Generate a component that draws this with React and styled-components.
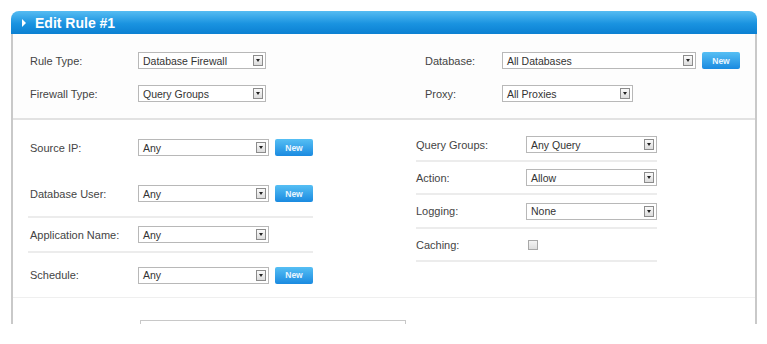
import React from "react";
import styled, { createGlobalStyle } from "styled-components";

const GlobalStyle = createGlobalStyle`
  html, body {
    margin: 0;
    padding: 0;
    background: #ffffff;
  }
  body {
    font-family: "Liberation Sans", Arial, sans-serif;
    color: #3a3a3a;
  }
`;

const Page = styled.div`
  width: 767px;
  height: 344px;
  padding: 11px 0 0 11px;
  box-sizing: border-box;
  overflow: hidden;
`;

const Panel = styled.div`
  width: 746px;
  height: 313px;
  display: flex;
  flex-direction: column;
  overflow: hidden;
`;

const Header = styled.div`
  height: 23px;
  flex: none;
  display: flex;
  align-items: center;
  gap: 9px;
  padding-left: 11px;
  border-radius: 8px 8px 0 0;
  background: linear-gradient(#56bcf2, #1a93e0 55%, #0b80d2);
  color: #fff;
  font-size: 14px;
  font-weight: bold;
`;

const Caret = styled.span`
  width: 0;
  height: 0;
  border-top: 4px solid transparent;
  border-bottom: 4px solid transparent;
  border-left: 4px solid #fff;
`;

const Body = styled.div`
  flex: 1;
  border-left: 2px solid #c9c9c9;
  border-right: 2px solid #c9c9c9;
  display: flex;
  flex-direction: column;
`;

const TopSection = styled.div`
  display: flex;
  padding: 10px 0 8px 17px;
  border-bottom: 2px solid #e2e2e2;
  background: #fdfdfd;
`;

const MidSection = styled.div`
  display: flex;
  gap: 103px;
  padding: 5px 0 0 15px;
  height: 172px;
  border-bottom: 1px solid #efefef;
`;

const Column = styled.div`
  display: flex;
  flex-direction: column;
  width: ${(p) => p.$w}px;
  padding-top: ${(p) => p.$pt || 0}px;
  flex: none;
`;

const Row = styled.div`
  display: flex;
  align-items: center;
  height: ${(p) => p.$h || 33}px;
  box-sizing: border-box;
  padding-left: ${(p) => p.$pl || 0}px;
  border-bottom: ${(p) => (p.$ruled ? "2px solid #ececec" : "none")};
`;

const Label = styled.div`
  width: ${(p) => p.$w}px;
  flex: none;
  font-size: 11px;
  color: #444;
`;

const Select = styled.div`
  width: ${(p) => p.$w}px;
  height: 17px;
  box-sizing: border-box;
  border: 1px solid #b8b8b8;
  background: #fff;
  display: flex;
  align-items: center;
  justify-content: space-between;
  padding: 0 2px 0 4px;
  font-size: 10.5px;
  color: #333;
  flex: none;
`;

const Arrow = styled.span`
  width: 10px;
  height: 11px;
  box-sizing: border-box;
  border: 1px solid #8c8c8c;
  background: linear-gradient(#fafafa, #dcdcdc);
  display: flex;
  align-items: center;
  justify-content: center;
  &::after {
    content: "";
    border-left: 2.5px solid transparent;
    border-right: 2.5px solid transparent;
    border-top: 3px solid #222;
  }
`;

const NewButton = styled.button`
  margin-left: 6px;
  width: 38px;
  height: 17px;
  border: none;
  border-radius: 2px;
  padding: 0;
  background: linear-gradient(#56bff4, #1a8ae0);
  color: #eaf6ff;
  font-family: "Liberation Sans", Arial, sans-serif;
  font-size: 8.5px;
  font-weight: bold;
  flex: none;
`;

const Checkbox = styled.span`
  width: 10px;
  height: 10px;
  box-sizing: border-box;
  border: 1px solid #a8a8a8;
  background: linear-gradient(#f4f4f4, #dedede);
  margin-left: 2px;
`;

const BottomSection = styled.div`
  display: flex;
  padding: 22px 0 0 127px;
`;

const PartialInput = styled.div`
  width: 264px;
  height: 20px;
  border: 1px solid #c8c8c8;
`;

const Field = ({ label, labelW, value, selectW, withNew, ...row }) => (
  <Row {...row}>
    <Label $w={labelW}>{label}</Label>
    <Select $w={selectW}>
      {value}
      <Arrow />
    </Select>
    {withNew && <NewButton>New</NewButton>}
  </Row>
);

export default function App() {
  return (
    <>
      <GlobalStyle />
      <Page>
        <Panel>
          <Header>
            <Caret />
            Edit Rule #1
          </Header>
          <Body>
            <TopSection>
              <Column $w={395}>
                <Field label="Rule Type:" labelW={108} value="Database Firewall" selectW={128} />
                <Field label="Firewall Type:" labelW={108} value="Query Groups" selectW={128} />
              </Column>
              <Column $w={320}>
                <Field label="Database:" labelW={77} value="All Databases" selectW={194} withNew />
                <Field label="Proxy:" labelW={77} value="All Proxies" selectW={131} />
              </Column>
            </TopSection>
            <MidSection>
              <Column $w={285}>
                <Field $h={46} $pl={2} label="Source IP:" labelW={108} value="Any" selectW={131} withNew />
                <Field $h={48} $pl={2} $ruled label="Database User:" labelW={108} value="Any" selectW={131} withNew />
                <Field $h={35} $pl={2} $ruled label="Application Name:" labelW={108} value="Any" selectW={131} />
                <Field $h={44} $pl={2} label="Schedule:" labelW={108} value="Any" selectW={131} withNew />
              </Column>
              <Column $w={241} $pt={4}>
                <Field $ruled label="Query Groups:" labelW={110} value="Any Query" selectW={131} />
                <Field $ruled label="Action:" labelW={110} value="Allow" selectW={131} />
                <Field $ruled $h={34} label="Logging:" labelW={110} value="None" selectW={131} />
                <Row $ruled>
                  <Label $w={110}>Caching:</Label>
                  <Checkbox />
                </Row>
              </Column>
            </MidSection>
            <BottomSection>
              <PartialInput />
            </BottomSection>
          </Body>
        </Panel>
      </Page>
    </>
  );
}
